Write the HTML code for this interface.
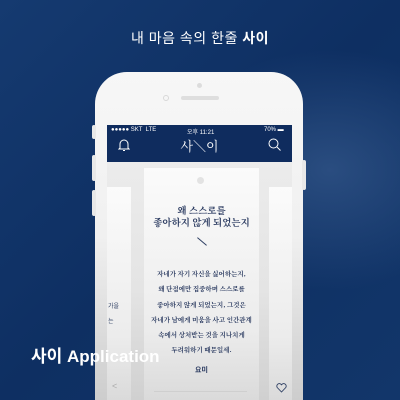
<!DOCTYPE html>
<html style="width:400px;height:400px;overflow:hidden"><head><meta charset="utf-8"><style>
*{margin:0;padding:0;box-sizing:border-box}
body{width:400px;height:400px;overflow:hidden;position:relative;font-family:"Liberation Sans","Noto Sans CJK KR",sans-serif;
background:radial-gradient(ellipse 160px 120px at 330px 170px,#2a4d80,rgba(20,50,95,0) 100%),linear-gradient(135deg,#153a70 0%,#0e2f62 50%,#12366a 100%)}
.title{position:absolute;top:28px;width:100%;text-align:center;color:#fff;font-size:14px;letter-spacing:0.5px}
.phone{position:absolute;left:95px;top:72px;width:208px;height:328px;border-radius:32px 32px 0 0;background:linear-gradient(#f7f7f7 0%,#f0f0f0 50%,#cdcdcd 100%)}
.btn{position:absolute;background:#e8e8e8;width:4px;border-radius:2px}
.screen{position:absolute;left:107px;top:125px;width:185px;height:275px;background:linear-gradient(#eeeeee 0%,#e4e4e4 60%,#d0d0d0 100%);overflow:hidden}
.nav{position:absolute;left:0;top:0;width:185px;height:37px;background:#0f2c5e;color:#fff}
.status{font-size:6px;position:absolute;top:2px}
.card{position:absolute;background:linear-gradient(#fbfbfb,#ececec 70%,#dadada);}
.c{color:#2a3a60;font-family:"Noto Serif CJK KR","Noto Serif CJK SC",serif;text-align:center;position:absolute;width:115px}
.cap{position:absolute;left:31px;top:342px;color:#fff;font-size:17px;font-weight:bold}
</style></head><body>
<div class="title">내 마음 속의 한줄 <b>사이</b></div>
<div class="phone"></div>
<div class="btn" style="left:92px;top:125px;height:14px"></div>
<div class="btn" style="left:92px;top:155px;height:26px"></div>
<div class="btn" style="left:92px;top:190px;height:26px"></div>
<div class="btn" style="left:302px;top:160px;height:30px"></div>
<div style="position:absolute;left:197px;top:83px;width:5px;height:5px;border-radius:50%;background:#dcdcdc"></div>
<div style="position:absolute;left:163px;top:95px;width:6px;height:6px;border-radius:50%;border:1px solid #d8d8d8"></div>
<div style="position:absolute;left:181px;top:96px;width:38px;height:4px;border-radius:2px;background:#dedede"></div>
<div class="screen">
 <div class="nav">
  <span class="status" style="left:4px">●●●●● SKT &nbsp;LTE</span>
  <span class="status" style="left:80px">오후 11:21</span>
  <span class="status" style="left:157px">70% ▬</span>
  <svg style="position:absolute;left:11px;top:13px" width="12" height="14" viewBox="0 0 12 14" fill="none" stroke="#fff" stroke-width="1"><path d="M2 10V6a4 4 0 0 1 8 0v4l1 1H1z M5 12.5h2"/></svg>
  <div style="position:absolute;left:0;width:185px;top:11px;text-align:center;font-size:13px;font-family:'Noto Serif CJK KR','Noto Serif CJK SC',serif">사＼이</div>
  <svg style="position:absolute;left:161px;top:13px" width="13" height="13" viewBox="0 0 13 13" fill="none" stroke="#fff" stroke-width="1"><circle cx="5.5" cy="5.5" r="4.5"/><path d="M9 9l3.5 3.5"/></svg>
 </div>
 <div class="card" style="left:0;top:62px;width:24px;height:213px"></div>
 <div class="card" style="left:162px;top:62px;width:23px;height:213px"></div>
 <div class="card" style="left:37px;top:43px;width:115px;height:232px"></div>
 <div style="position:absolute;left:90px;top:52px;width:7px;height:7px;border-radius:50%;background:#e3e3e3"></div>
 <div class="c" style="left:37px;top:79px;font-size:9.5px;line-height:12px;font-weight:bold">왜 스스로를<br>좋아하지 않게 되었는지</div>
 <div style="position:absolute;left:89px;top:116px;width:12px;height:1px;background:#2e3f63;transform:rotate(40deg)"></div>
 <div class="c" style="left:37px;top:141px;font-size:6.5px;line-height:15.3px;font-weight:bold">자네가 자기 자신을 싫어하는지,<br>왜 단점에만 집중하며 스스로를<br>좋아하지 않게 되었는지, 그것은<br>자네가 남에게 미움을 사고 인간관계<br>속에서 상처받는 것을 지나치게<br>두려워하기 때문일세.</div>
 <div class="c" style="left:37px;top:240px;font-size:7px;font-family:'Liberation Sans','Noto Sans CJK KR',sans-serif;font-weight:bold">요미</div>
 <div style="position:absolute;left:1px;top:176px;font-size:6px;color:#2e3f63">가을<br><br>는</div>
 <div style="position:absolute;left:47px;top:266px;width:93px;height:1px;background:#cfcfcf"></div>
 <div style="position:absolute;left:5px;top:256px;color:#aaa;font-size:9px;line-height:10px">&lt;</div>
 <svg style="position:absolute;left:169px;top:258px" width="11" height="10" viewBox="0 0 11 10" fill="none" stroke="#2e3f63" stroke-width="0.9"><path d="M5.5 9L1.2 4.5A2.4 2.4 0 0 1 5.5 1.8 2.4 2.4 0 0 1 9.8 4.5z"/></svg>
</div>
<div class="cap">사이 Application</div>
</body></html>
